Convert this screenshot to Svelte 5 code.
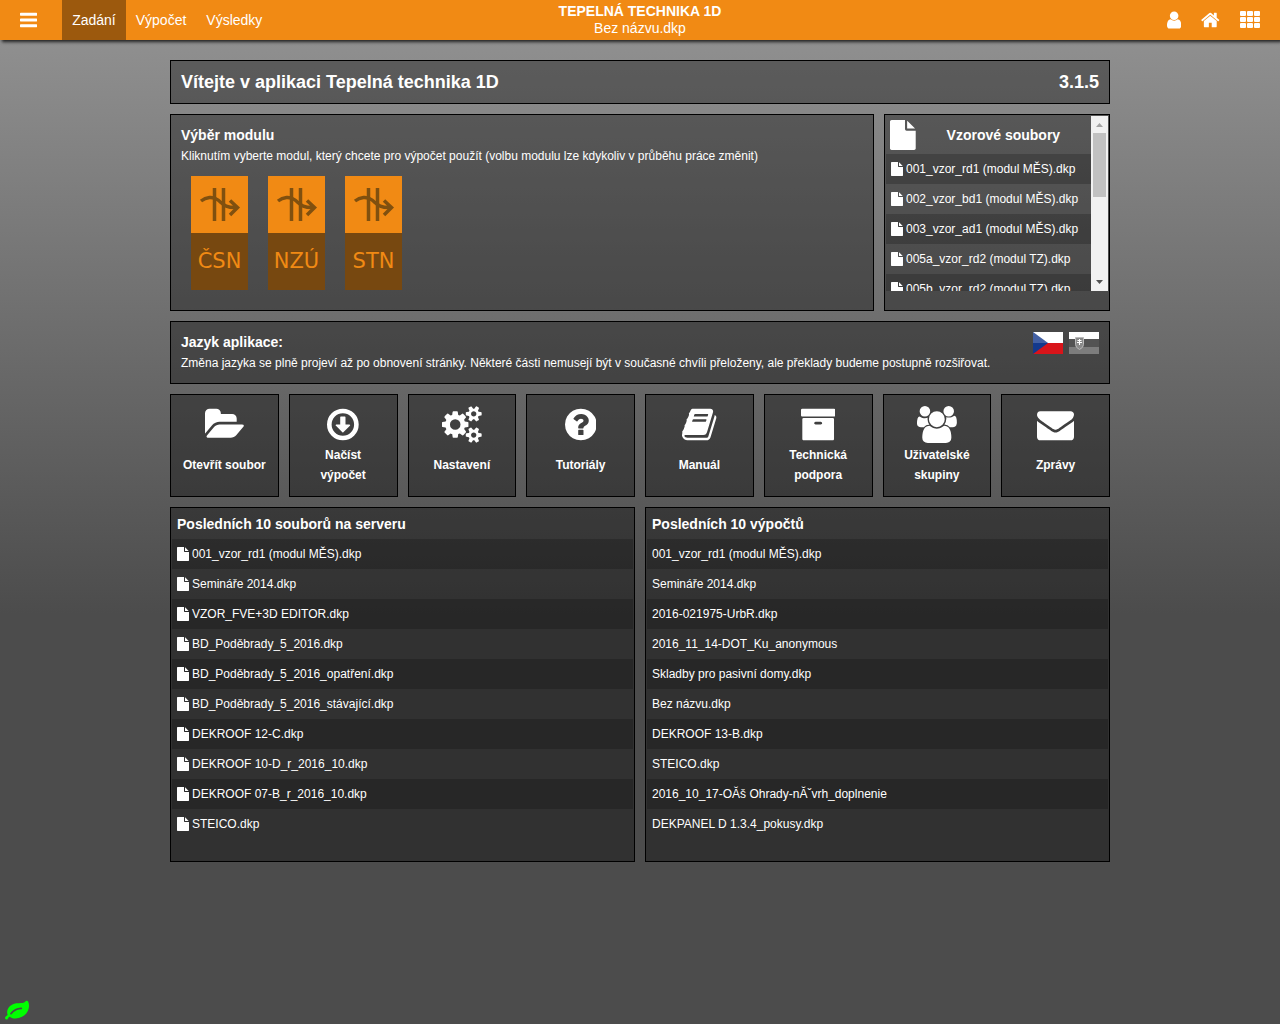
<script lang="ts">
  type Icon = { box: string; d: string };

  const file: Icon = {
    box: "128 0 1536 1792",
    d: "M1152 512v-472q22 14 36 28l408 408q14 14 28 36h-472zm-128 32q0 40 28 68t68 28h544v1056q0 40-28 68t-68 28h-1344q-40 0-68-28t-28-68v-1600q0-40 28-68t68-28h800v544z",
  };
  const bars: Icon = {
    box: "128 0 1536 1792",
    d: "M1664 1344v128q0 26-19 45t-45 19h-1408q-26 0-45-19t-19-45v-128q0-26 19-45t45-19h1408q26 0 45 19t19 45zm0-512v128q0 26-19 45t-45 19h-1408q-26 0-45-19t-19-45v-128q0-26 19-45t45-19h1408q26 0 45 19t19 45zm0-512v128q0 26-19 45t-45 19h-1408q-26 0-45-19t-19-45v-128q0-26 19-45t45-19h1408q26 0 45 19t19 45z",
  };
  const user: Icon = {
    box: "256 0 1280 1792",
    d: "M1536 1399q0 109-62.5 187t-150.5 78h-854q-88 0-150.5-78t-62.5-187q0-85 8.5-160.5t31.5-152 58.5-131 94-89 134.5-34.5q131 128 313 128t313-128q76 0 134.5 34.5t94 89 58.5 131 31.5 152 8.5 160.5zm-256-887q0 159-112.5 271.5t-271.5 112.5-271.5-112.5-112.5-271.5 112.5-271.5 271.5-112.5 271.5 112.5 112.5 271.5z",
  };
  const home: Icon = {
    box: "64 0 1664 1792",
    d: "M1472 992v480q0 26-19 45t-45 19h-384v-384h-256v384h-384q-26 0-45-19t-19-45v-480q0-1 .5-3t.5-3l575-474 575 474q1 2 1 6zm223-69l-62 74q-8 9-21 11h-3q-13 0-21-7l-692-577-692 577q-12 8-24 7-13-2-21-11l-62-74q-8-10-7-23.5t11-21.5l719-599q32-26 76-26t76 26l244 204v-195q0-14 9-23t23-9h192q14 0 23 9t9 23v408l219 182q10 8 11 21.5t-7 23.5z",
  };
  const leaf: Icon = {
    box: "0 0 1792 1792",
    d: "M1280 704q0-26-19-45t-45-19q-172 0-318 49.5t-259.5 134-235.5 219.5q-19 21-19 45 0 26 19 45t45 19q24 0 45-19 27-24 74-71t67-66q137-124 268.5-176t313.5-52q26 0 45-19t19-45zm512-198q0 95-20 193-46 224-184.5 383t-357.5 268q-214 108-438 108-148 0-286-47-15-5-88-42t-96-37q-16 0-39.5 32t-45 70-52.5 70-60 32q-43 0-63.5-17.5t-45.5-59.5q-2-4-6-11t-5.5-10-3-9.5-1.5-13.5q0-35 31-73.5t68-65.5 68-56 31-48q0-4-14-38t-16-44q-9-51-9-104 0-115 43.5-220t119-184.5 170.5-139 204-95.5q55-18 145-25.5t179.5-9 178.5-6 163.5-24 113.5-56.5l29.5-29.5 29.5-28 27-20 36.5-16 43.5-4.5q39 0 70.5 46t47.5 112 24 124 8 96z",
  };

  const tiles: { label: string; icon: Icon }[] = [
    {
      label: "Otevřít soubor",
      icon: {
        box: "0 0 1879 1792",
        d: "M1879 952q0 31-31 66l-336 396q-43 51-120.5 86.5t-143.5 35.5h-1088q-34 0-60.5-13t-26.5-43q0-31 31-66l336-396q43-51 120.5-86.5t143.5-35.5h1088q34 0 60.5 13t26.5 43zm-343-344v160h-832q-94 0-197 47.5t-164 119.5l-337 396-5 6q0-4-.5-12.5t-.5-12.5v-960q0-92 66-158t158-66h320q92 0 158 66t66 158v32h544q92 0 158 66t66 158z",
      },
    },
    {
      label: "Načíst\nvýpočet",
      icon: {
        box: "128 0 1536 1792",
        d: "M896 128a768 768 0 1 1 0 1536a768 768 0 1 1 0-1536zm0 224a544 544 0 1 0 0 1088a544 544 0 1 0 0-1088zm-96 160h192q32 0 32 32v352h192q22 0 30 20t-7 35l-319 319q-11 10-24 10t-24-10l-320-320q-14-15-7-34.500t31-19.500h192v-352q0-32 32-32z",
      },
    },
    {
      label: "Nastavení",
      icon: {
        box: "0 0 1920 1792",
        d: "M896 896q0-106-75-181t-181-75-181 75-75 181 75 181 181 75 181-75 75-181zm768 512q0-52-38-90t-90-38-90 38-38 90q0 53 37.5 90.5t90.5 37.5 90.5-37.5 37.5-90.5zm0-1024q0-52-38-90t-90-38-90 38-38 90q0 53 37.5 90.5t90.5 37.5 90.5-37.5 37.5-90.5zm-384 421v185q0 10-7 19.5t-16 10.5l-155 24q-11 35-32 76 34 48 90 115 7 11 7 20 0 12-7 19-23 30-82.5 89.5t-78.5 59.5q-11 0-21-7l-115-90q-37 19-77 31-11 108-23 155-7 24-30 24h-186q-11 0-20-7.5t-10-17.5l-23-153q-34-10-75-31l-118 89q-7 7-20 7-11 0-21-8-144-133-144-160 0-9 7-19 10-14 41-53t47-61q-23-44-35-82l-152-24q-10-1-17-9.5t-7-19.5v-185q0-10 7-19.5t16-10.5l155-24q11-35 32-76-34-48-90-115-7-11-7-20 0-12 7-20 22-30 82-89t79-59q11 0 21 7l115 90q34-18 77-32 11-108 23-154 7-24 30-24h186q11 0 20 7.5t10 17.5l23 153q34 10 75 31l118-89q8-7 20-7 11 0 21 8 144 133 144 160 0 8-7 19-12 16-42 54t-45 60q23 48 34 82l152 23q10 2 17 10.5t7 19.5zm640 533v140q0 16-149 31-12 27-30 52 51 113 51 138 0 4-4 7-122 71-124 71-8 0-46-47t-52-68q-20 2-30 2t-30-2q-14 21-52 68t-46 47q-2 0-124-71-4-3-4-7 0-25 51-138-18-25-30-52-149-15-149-31v-140q0-16 149-31 13-29 30-52-51-113-51-138 0-4 4-7 4-2 35-20t59-34 30-16q8 0 46 46.5t52 67.5q20-2 30-2t30 2q51-71 92-112l6-2q4 0 124 70 4 3 4 7 0 25-51 138 17 23 30 52 149 15 149 31zm0-1024v140q0 16-149 31-12 27-30 52 51 113 51 138 0 4-4 7-122 71-124 71-8 0-46-47t-52-68q-20 2-30 2t-30-2q-14 21-52 68t-46 47q-2 0-124-71-4-3-4-7 0-25 51-138-18-25-30-52-149-15-149-31v-140q0-16 149-31 13-29 30-52-51-113-51-138 0-4 4-7 4-2 35-20t59-34 30-16q8 0 46 46.500t52 67.500q20-2 30-2t30 2q51-71 92-112l6-2q4 0 124 70 4 3 4 7 0 25-51 138 17 23 30 52 149 15 149 31z",
      },
    },
    {
      label: "Tutoriály",
      icon: {
        box: "128 0 1536 1792",
        d: "M1024 1376v-192q0-14-9-23t-23-9h-192q-14 0-23 9t-9 23v192q0 14 9 23t23 9h192q14 0 23-9t9-23zm256-672q0-88-55.5-163t-138.5-116-170-41q-243 0-371 213-15 24 8 42l132 100q7 6 19 6 16 0 25-12 53-68 86-92 34-24 86-24 48 0 85.5 26t37.5 59q0 38-20 61t-68 45q-63 28-115.5 86.5t-52.5 125.5v36q0 14 9 23t23 9h192q14 0 23-9t9-23q0-19 21.5-49.5t54.5-49.5q32-18 49-28.5t46-35 44.5-48 28-60.5 12.5-81zm384 192q0 209-103 385.5t-279.5 279.5-385.5 103-385.5-103-279.5-279.5-103-385.5 103-385.5 279.5-279.5 385.5-103 385.5 103 279.5 279.5 103 385.5z",
      },
    },
    {
      label: "Manuál",
      icon: {
        box: "64 0 1664 1792",
        d: "M1703 478q40 57 18 129l-275 906q-19 64-76.5 107.5t-122.5 43.5h-923q-77 0-148.5-53.5t-99.5-131.5q-24-67-2-127 0-4 3-27t4-37q1-8-3-21.5t-3-19.5q2-11 8-21t16.5-23.5 16.5-23.5q23-38 45-91.5t30-91.5q3-10 .5-30t-.5-28q3-11 17-28t17-23q21-36 42-92t25-90q1-9-2.5-32t.5-28q4-13 22-30.5t22-22.5q19-26 42.5-84.5t27.5-96.5q1-8-3-25.5t-2-26.5q2-8 9-18t18-23 17-21q8-12 16.5-30.5t15-35 16-36 19.5-32 26.5-23.5 36-11.5 47.5 5.5l-1 3q38-9 51-9h761q74 0 114 56t18 130l-274 906q-36 119-71.5 153.5t-128.5 34.5h-869q-27 0-38 15-11 16-1 43 24 70 144 70h923q29 0 56-15.5t35-41.5l300-987q7-22 5-57 38 15 59 43zm-1064 2q-4 13 2 22.5t20 9.5h608q13 0 25.5-9.5t16.5-22.5l21-64q4-13-2-22.5t-20-9.5h-608q-13 0-25.5 9.5t-16.5 22.5zm-83 256q-4 13 2 22.5t20 9.5h608q13 0 25.5-9.5t16.5-22.5l21-64q4-13-2-22.5t-20-9.5h-608q-13 0-25.5 9.5t-16.5 22.5z",
      },
    },
    {
      label: "Technická podpora",
      icon: {
        box: "64 0 1664 1792",
        d: "M1088 832q0-26-19-45t-45-19h-256q-26 0-45 19t-19 45 19 45 45 19h256q26 0 45-19t19-45zm576-192v960q0 26-19 45t-45 19h-1408q-26 0-45-19t-19-45v-960q0-26 19-45t45-19h1408q26 0 45 19t19 45zm64-448v256q0 26-19 45t-45 19h-1536q-26 0-45-19t-19-45v-256q0-26 19-45t45-19h1536q26 0 45 19t19 45z",
      },
    },
    {
      label: "Uživatelské skupiny",
      icon: {
        box: "0 0 1920 1792",
        d: "M593 896q-162 5-265 128h-134q-82 0-138-40.5t-56-118.5q0-353 124-353 6 0 43.5 21t97.5 42.5 119 21.5q67 0 133-23-5 37-5 66 0 159 93 290zm1071 637q0 120-73 189.5t-194 69.5h-874q-121 0-194-69.5t-73-189.5q0-53 3.5-103.5t14-109 26.5-108.5 43-97.5 62-81 85.5-53.5 111.5-20q10 0 43 21.5t73 48 107 48 135 21.5 135-21.5 107-48 73-48 43-21.5q61 0 111.5 20t85.5 53.5 62 81 43 97.5 26.5 108.5 14 109 3.5 103.5zm-1024-1277q0 106-75 181t-181 75-181-75-75-181 75-181 181-75 181 75 75 181zm704 384q0 159-112.5 271.5t-271.5 112.5-271.5-112.5-112.5-271.5 112.5-271.5 271.5-112.5 271.5 112.5 112.5 271.5zm576 225q0 78-56 118.5t-138 40.5h-134q-103-123-265-128 93-131 93-290 0-29-5-66 66 23 133 23 59 0 119-21.5t97.5-42.5 43.5-21q124 0 124 353zm-128-609q0 106-75 181t-181 75-181-75-75-181 75-181 181-75 181 75 75 181z",
      },
    },
    {
      label: "Zprávy",
      icon: {
        box: "0 0 1792 1792",
        d: "M1792 710v794q0 66-47 113t-113 47h-1472q-66 0-113-47t-47-113v-794q44 49 101 87 362 246 497 345 57 42 92.5 65.5t94.5 48 110 24.5h2q51 0 110-24.5t94.5-48 92.5-65.5q170-123 498-345 57-39 100-87zm0-294q0 79-49 151t-122 123q-376 261-468 325-10 7-42.5 31t-54 38.5-52 32.5-57.5 27-50 9h-2q-23 0-50-9t-57.5-27-52-32.5-54-38.5-42.5-31q-91-64-262-182.5t-205-142.5q-62-42-117-115.5t-55-136.5q0-78 41.5-130t118.5-52h1472q65 0 112.500 47t47.500 113z",
      },
    },
  ];

  const modules = ["ČSN", "NZÚ", "STN"];
  const samples = [
    "001_vzor_rd1 (modul MĚS).dkp",
    "002_vzor_bd1 (modul MĚS).dkp",
    "003_vzor_ad1 (modul MĚS).dkp",
    "005a_vzor_rd2 (modul TZ).dkp",
    "005b_vzor_rd2 (modul TZ).dkp",
  ];
  const serverFiles = [
    "001_vzor_rd1 (modul MĚS).dkp",
    "Semináře 2014.dkp",
    "VZOR_FVE+3D EDITOR.dkp",
    "BD_Poděbrady_5_2016.dkp",
    "BD_Poděbrady_5_2016_opatření.dkp",
    "BD_Poděbrady_5_2016_stávající.dkp",
    "DEKROOF 12-C.dkp",
    "DEKROOF 10-D_r_2016_10.dkp",
    "DEKROOF 07-B_r_2016_10.dkp",
    "STEICO.dkp",
  ];
  const calculations = [
    "001_vzor_rd1 (modul MĚS).dkp",
    "Semináře 2014.dkp",
    "2016-021975-UrbR.dkp",
    "2016_11_14-DOT_Ku_anonymous",
    "Skladby pro pasivní domy.dkp",
    "Bez názvu.dkp",
    "DEKROOF 13-B.dkp",
    "STEICO.dkp",
    "2016_10_17-OĂš Ohrady-nĂˇvrh_doplnenie",
    "DEKPANEL D 1.3.4_pokusy.dkp",
  ];

  const tabs = ["Zadání", "Výpočet", "Výsledky"];
  let tab = $state("Zadání");
  let lang = $state("cs");

  let scroller: HTMLDivElement;
  let scrolled = $state(0);
  let thumb = $state(45);

  function updateThumb() {
    scrolled = (scroller.scrollTop / scroller.scrollHeight) * 100;
    thumb = (scroller.clientHeight / scroller.scrollHeight) * 100;
  }
  $effect(() => {
    updateThumb();
  });
</script>

{#snippet glyph(icon: Icon)}
  <svg class="glyph" viewBox={icon.box} aria-hidden="true"><path d={icon.d} /></svg>
{/snippet}

{#snippet fileRow(name: string)}
  <li><a href="#soubor">{@render glyph(file)}<span>{name}</span></a></li>
{/snippet}

<header>
  <div class="left">
    <button class="menu" aria-label="Menu">{@render glyph(bars)}</button>
    <nav>
      {#each tabs as name}
        <button class:active={tab === name} onclick={() => (tab = name)}>{name}</button>
      {/each}
    </nav>
  </div>
  <div class="title">
    <strong>TEPELNÁ TECHNIKA 1D</strong>
    <span>Bez názvu.dkp</span>
  </div>
  <div class="right">
    <button aria-label="Uživatel">{@render glyph(user)}</button>
    <button aria-label="Domů">{@render glyph(home)}</button>
    <button aria-label="Aplikace">
      <svg class="glyph" viewBox="0 0 20 20" aria-hidden="true">
        {#each [1, 7, 13] as y}
          {#each [0, 7, 14] as x}
            <rect {x} {y} width="6" height="5" rx="1" />
          {/each}
        {/each}
      </svg>
    </button>
  </div>
</header>

<main>
  <section class="panel welcome">
    <h1>Vítejte v aplikaci Tepelná technika 1D</h1>
    <span>3.1.5</span>
  </section>

  <div class="top">
    <section class="panel padded">
      <h2>Výběr modulu</h2>
      <p>Kliknutím vyberte modul, který chcete pro výpočet použít (volbu modulu lze kdykoliv v průběhu práce změnit)</p>
      <div class="modules">
        {#each modules as name}
          <button class="module">
            <svg viewBox="0 0 57 57" aria-hidden="true">
              <path d="M23.500 12v33M32.500 12v33" />
              <path d="M10 25C15 21 22 20 27 24C32 28 34 32 46 31.500M39 24.500l7.500 7l-7.500 7.500" />
            </svg>
            <span>{name}</span>
          </button>
        {/each}
      </div>
    </section>

    <section class="panel samples">
      <div class="scroller" bind:this={scroller} onscroll={updateThumb}>
        <h2>{@render glyph(file)}<span>Vzorové soubory</span></h2>
        <ul class="files">
          {#each samples as name}
            {@render fileRow(name)}
          {/each}
        </ul>
      </div>
      <div class="scrollbar">
        <button class="up" aria-label="Nahoru" onclick={() => scroller.scrollBy(0, -30)}>
          <svg viewBox="0 0 17 17"><path d="M5 11h7l-3.500-4z" /></svg>
        </button>
        <div class="track">
          <div class="thumb" style="top: {scrolled}%; height: {thumb}%"></div>
        </div>
        <button aria-label="Dolů" onclick={() => scroller.scrollBy(0, 30)}>
          <svg viewBox="0 0 17 17"><path d="M5 6h7l-3.500 4z" /></svg>
        </button>
      </div>
    </section>
  </div>

  <section class="panel padded language">
    <div>
      <h2>Jazyk aplikace:</h2>
      <p>Změna jazyka se plně projeví až po obnovení stránky. Některé části nemusejí být v současné chvíli přeloženy, ale překlady budeme postupně rozšiřovat.</p>
    </div>
    <div class="flags">
      <button aria-label="Čeština" class:off={lang !== "cs"} onclick={() => (lang = "cs")}>
        <svg viewBox="0 0 30 22">
          <path fill="#fff" d="M0 0h30v11H0z" />
          <path fill="#d9141a" d="M0 11h30v11H0z" />
          <path fill="#14398c" d="M0 0l15 11L0 22z" />
          <path fill="#fff" opacity=".2" d="M0 0l15 11H0z" />
        </svg>
      </button>
      <button aria-label="Slovenčina" class:off={lang !== "sk"} onclick={() => (lang = "sk")}>
        <svg viewBox="0 0 30 22">
          <path fill="#fff" d="M0 0h30v7H0z" />
          <path fill="#2458b0" d="M0 7h30v8H0z" />
          <path fill="#ea6060" d="M0 15h30v7H0z" />
          <path fill="#e87070" stroke="#bbb" d="M6.500 5.500h8v7q0 3-4 5q-4-2-4-5z" />
          <path fill="none" stroke="#fff" d="M10.500 7v6M8.500 8.500h4M8 10.500h5" />
        </svg>
      </button>
    </div>
  </section>

  <div class="tiles">
    {#each tiles as tile}
      <button class="panel tile">
        {@render glyph(tile.icon)}
        <span class="label">{tile.label}</span>
      </button>
    {/each}
  </div>

  <div class="recent">
    <section class="panel">
      <h2>Posledních 10 souborů na serveru</h2>
      <ul class="files">
        {#each serverFiles as name}
          {@render fileRow(name)}
        {/each}
      </ul>
    </section>
    <section class="panel">
      <h2>Posledních 10 výpočtů</h2>
      <ul class="files">
        {#each calculations as name}
          <li><a href="#vypocet">{name}</a></li>
        {/each}
      </ul>
    </section>
  </div>
</main>

<a class="eco" href="#eko" aria-label="Úsporný režim">{@render glyph(leaf)}</a>

<style>
  :global(body) {
    min-height: 100vh;
    background: linear-gradient(#949494, #4c4c4c 60%);
    color: #fff;
    font: 12px/20px "Liberation Sans", Arial, sans-serif;
  }
  button {
    padding: 0;
    border: 0;
    background: none;
    color: inherit;
    font: inherit;
    cursor: pointer;
  }
  a {
    color: inherit;
    text-decoration: none;
  }
  h1, h2, p, ul {
    margin: 0;
    padding: 0;
  }
  ul {
    list-style: none;
  }
  h1 {
    font-size: 18px;
  }
  h2 {
    font-size: 14px;
    line-height: 20px;
  }
  .glyph {
    display: block;
    height: 20px;
    fill: currentColor;
  }

  header {
    display: grid;
    grid-template-columns: 1fr auto 1fr;
    height: 40px;
    background: #f18a14;
    box-shadow: 2px 2px 3px #222;
    font-size: 14px;
  }
  .left, nav, .right {
    display: flex;
  }
  .menu {
    padding: 0 25px 0 20px;
  }
  nav button {
    padding: 0 10px;
  }
  nav .active {
    background: #9c590d;
  }
  .title {
    display: flex;
    flex-direction: column;
    padding-top: 3px;
    line-height: 17px;
    text-align: center;
  }
  .right {
    justify-content: flex-end;
    gap: 20px;
    padding-right: 20px;
  }

  main {
    display: flex;
    flex-direction: column;
    gap: 10px;
    max-width: 940px;
    margin: 20px auto;
  }
  .panel {
    box-sizing: border-box;
    border: 1px solid #000;
    background: rgba(0, 0, 0, 0.35);
  }
  .padded {
    padding: 10px;
  }
  .padded p {
    padding-top: 2px;
    line-height: 19px;
  }
  .welcome {
    display: flex;
    justify-content: space-between;
    padding: 11px 10px;
    font-size: 18px;
    font-weight: bold;
  }
  .top {
    display: grid;
    grid-template-columns: 1fr 226px;
    gap: 10px;
  }
  .modules {
    display: flex;
    gap: 20px;
    padding: 10px;
  }
  .module {
    width: 57px;
    background: #774810;
    color: #f18a14;
    font: 21px/57px "DejaVu Sans", Verdana, sans-serif;
  }
  .module svg {
    display: block;
    background: #f18a14;
    fill: none;
    stroke: #80500f;
    stroke-width: 3.5;
  }
  .module span {
    display: block;
  }

  .samples {
    display: flex;
    align-items: flex-start;
    padding: 1px;
  }
  .scroller {
    flex: 1;
    height: 175px;
    overflow-y: scroll;
    scrollbar-width: none;
  }
  .scrollbar {
    display: flex;
    flex-direction: column;
    width: 17px;
    height: 175px;
    background: #f1f1f1;
  }
  .scrollbar svg {
    display: block;
    fill: #505050;
  }
  .scrollbar .up svg {
    fill: #a3a3a3;
  }
  .track {
    position: relative;
    flex: 1;
    margin: 0 2px;
  }
  .thumb {
    position: absolute;
    width: 100%;
    background: #c1c1c1;
  }
  .scroller h2 {
    display: flex;
    align-items: center;
    height: 38px;
    padding-left: 4px;
  }
  .scroller h2 .glyph {
    height: 30px;
  }
  .scroller h2 span {
    flex: 1;
    text-align: center;
  }
  .scroller .files {
    min-height: 348px;
  }
  .files a {
    display: flex;
    align-items: center;
    gap: 3px;
    height: 30px;
    padding: 0 5px;
    white-space: nowrap;
  }
  .files li:nth-child(odd) {
    background: rgba(0, 0, 0, 0.2);
  }
  .files .glyph {
    height: 14px;
  }

  .language {
    display: flex;
    justify-content: space-between;
  }
  .flags {
    display: flex;
    align-items: flex-start;
    gap: 6px;
  }
  .flags svg {
    display: block;
    width: 30px;
    height: 22px;
  }
  .flags .off {
    filter: grayscale(1);
  }

  .tiles {
    display: grid;
    grid-template-columns: repeat(8, 1fr);
    gap: 10px;
  }
  .tile {
    display: flex;
    flex-direction: column;
    align-items: center;
    padding: 11px 10px 9px;
    font-weight: bold;
  }
  .tile .glyph {
    height: 37px;
  }
  .label {
    display: flex;
    align-items: center;
    height: 44px;
    white-space: pre-line;
  }

  .recent {
    display: grid;
    grid-template-columns: 1fr 1fr;
    gap: 10px;
  }
  .recent .panel {
    padding: 6px 1px 22px;
  }
  .recent h2 {
    padding: 0 5px 5px;
  }

  .eco {
    position: fixed;
    left: 5px;
    bottom: 1px;
    color: #0f0;
  }
  .eco .glyph {
    height: 24px;
  }
</style>
